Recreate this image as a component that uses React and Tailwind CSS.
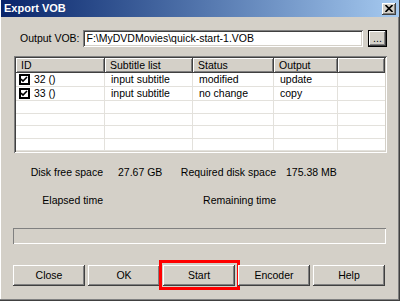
import React from "react";

const raised =
  "shadow-[inset_-1px_-1px_0_#404040,inset_1px_1px_0_#ffffff,inset_-2px_-2px_0_#808080,inset_2px_2px_0_#d4d0c8]";
const sunken =
  "shadow-[inset_1px_1px_0_#808080,inset_-1px_-1px_0_#ffffff,inset_2px_2px_0_#404040,inset_-2px_-2px_0_#d4d0c8]";

const columns = [
  { label: "ID", w: "w-[89px]" },
  { label: "Subtitle list", w: "w-[88px]" },
  { label: "Status", w: "w-[81px]" },
  { label: "Output", w: "w-[64px]" },
  { label: "", w: "flex-1" },
];

const rows = [
  ["32 ()", "input subtitle", "modified", "update"],
  ["33 ()", "input subtitle", "no change", "copy"],
  null,
  null,
  null,
  null,
];

function Checkbox() {
  return (
    <span className="w-[11px] h-[11px] border-2 border-black bg-white flex items-center justify-center mr-[4px] shrink-0">
      <svg width="7" height="7" viewBox="0 0 7 7">
        <path d="M0 3 L2 5 L6 1" stroke="#000" strokeWidth="1.6" fill="none" />
      </svg>
    </span>
  );
}

function Btn({ children, highlight }) {
  return (
    <div className="relative">
      <button className={`w-[72px] h-[21px] bg-[#d4d0c8] text-black ${raised}`}>{children}</button>
      {highlight && (
        <div className="absolute -left-[4px] -right-[5px] -top-[5px] -bottom-[4px] border-[3px] border-[#ff0000]"></div>
      )}
    </div>
  );
}

export default function App() {
  return (
    <div
      className="w-[400px] h-[301px] bg-[#d4d0c8] flex flex-col text-[10.5px] text-black whitespace-nowrap shadow-[inset_-1px_-1px_0_#404040,inset_-2px_-2px_0_#808080,inset_1px_0_0_#ffffff] overflow-hidden"
      style={{ fontFamily: '"Liberation Sans", Arial, sans-serif' }}
    >
      {/* Title bar */}
      <div className="h-[17px] mx-[1px] flex items-center justify-between bg-gradient-to-r from-[#0a246a] to-[#a6caf0] pl-[3px] pr-[3px]">
        <span className="text-white font-bold text-[11px]">Export VOB</span>
        <div className={`w-[14px] h-[12px] bg-[#d4d0c8] flex items-center justify-center ${raised}`}>
          <svg width="8" height="7" viewBox="0 0 8 7">
            <path d="M0.5 0 L7.5 7 M7.5 0 L0.5 7" stroke="#000" strokeWidth="1.6" />
          </svg>
        </div>
      </div>

      {/* Output row */}
      <div className="flex items-center mt-[13px] h-[17px] pl-[20px] pr-[13px]">
        <span className="shrink-0 mr-[3px]">Output VOB:</span>
        <div className={`flex-1 h-[17px] bg-white flex items-center pl-[4px] ${sunken}`}>
          F:\MyDVDMovies\quick-start-1.VOB
        </div>
        <button className={`ml-[5px] w-[19px] h-[17px] shrink-0 bg-[#d4d0c8] border border-black flex items-end justify-center pb-[3px] leading-none ${raised}`}>
          ...
        </button>
      </div>

      {/* List view */}
      <div className={`mt-[9px] ml-[14px] w-[373px] h-[97px] bg-white p-[2px] flex flex-col ${sunken}`}>
        <div className="flex h-[15px]">
          {columns.map((c, i) => (
            <div
              key={i}
              className={`${c.w} bg-[#d4d0c8] flex items-center pl-[5px] ${raised}`}
            >
              {c.label}
            </div>
          ))}
        </div>
        {rows.map((r, i) => (
          <div key={i} className="flex h-[14px] border-b border-[#e3e1dc]">
            <div className="w-[89px] flex items-center pl-[3px] border-r border-[#e3e1dc]">
              {r && <Checkbox />}
              {r ? r[0] : ""}
            </div>
            <div className="w-[88px] flex items-center pl-[6px] border-r border-[#e3e1dc]">{r ? r[1] : ""}</div>
            <div className="w-[81px] flex items-center pl-[6px] border-r border-[#e3e1dc]">{r ? r[2] : ""}</div>
            <div className="w-[64px] flex items-center pl-[6px] border-r border-[#e3e1dc]">{r ? r[3] : ""}</div>
            <div className="flex-1"></div>
          </div>
        ))}
      </div>

      {/* Info rows */}
      <div className="flex items-center mt-[13px] h-[14px]">
        <span className="w-[103px] flex justify-end">Disk free space</span>
        <span className="ml-[15px] w-[60px]">27.67 GB</span>
        <span className="w-[98px] flex justify-end">Required disk space</span>
        <span className="ml-[10px]">175.38 MB</span>
      </div>
      <div className="flex items-center mt-[14px] h-[14px]">
        <span className="w-[103px] flex justify-end">Elapsed time</span>
        <span className="ml-[15px] w-[60px]"></span>
        <span className="w-[98px] flex justify-end">Remaining time</span>
      </div>

      {/* Progress bar */}
      <div className="mt-[20px] ml-[13px] w-[373px] h-[16px] shadow-[inset_1px_1px_0_#808080,inset_-1px_-1px_0_#ffffff]"></div>

      {/* Buttons */}
      <div className="flex gap-[3px] ml-[13px] mt-[21px]">
        <Btn>Close</Btn>
        <Btn>OK</Btn>
        <Btn highlight>Start</Btn>
        <Btn>Encoder</Btn>
        <Btn>Help</Btn>
      </div>
    </div>
  );
}
